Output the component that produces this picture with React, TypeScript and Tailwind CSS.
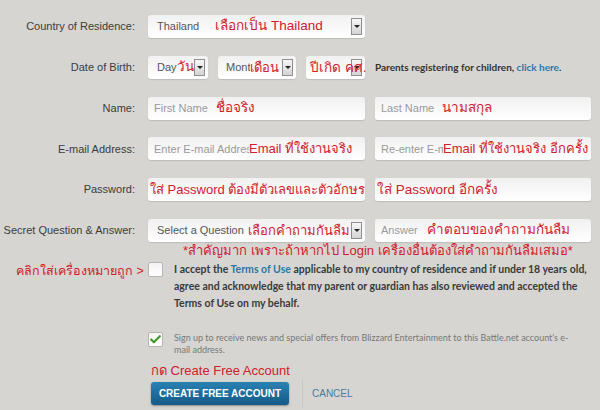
import { Check } from "lucide-react";

const red = "text-[#d0202c]";
const narrow = "font-['Lato','Liberation_Sans',sans-serif]";

function Arrow() {
  return (
    <span className="ml-auto mr-[3px] flex h-[17px] w-[11px] shrink-0 items-center justify-center border border-[#8f8f8f] bg-gradient-to-b from-[#f7f7f7] to-[#d4d4d4]">
      <span className="h-0 w-0 border-x-[3px] border-t-[3px] border-x-transparent border-t-[#222]" />
    </span>
  );
}

function Box({ className = "", children }: { className?: string; children: React.ReactNode }) {
  return (
    <div
      className={`relative flex h-[23px] shrink-0 items-center whitespace-nowrap rounded-[3px] bg-gradient-to-b from-[#f1f1f1] to-white shadow-[0_1px_1px_rgba(0,0,0,0.12)] ${className}`}
    >
      {children}
    </div>
  );
}

function Row({ label, children }: { label: string; children: React.ReactNode }) {
  return (
    <div className="flex h-[23px] items-center">
      <div className="w-[135px] shrink-0 whitespace-nowrap text-right text-[11px] text-[#3c3c3c]">{label}</div>
      <div className="ml-[13px] flex items-center gap-[10px]">{children}</div>
    </div>
  );
}

const ph = "text-[11px] text-[#9a9a9a]";
const ann = `text-[13.5px] ${red}`;
const ann13 = `text-[13px] ${red}`;

export default function App() {
  return (
    <div className="relative h-[410px] w-[600px] overflow-hidden bg-[#d6d5d1] font-['Liberation_Sans',sans-serif]">
      <div className="flex flex-col gap-[17.8px] pt-[15px]">
        <Row label="Country of Residence:">
          <Box className="w-[217px] pl-[9px]">
            <span className="text-[11px] text-[#555]">Thailand</span>
            <span className={`ml-[16px] ${ann}`}>เลือกเป็น Thailand</span>
            <Arrow />
          </Box>
        </Row>

        <Row label="Date of Birth:">
          <Box className="w-[60px] pl-[9px]">
            <span className="text-[11px] text-[#555]">Day</span>
            <span className={ann}>วัน</span>
            <Arrow />
          </Box>
          <Box className="w-[78px] pl-[8px]">
            <span className="w-[24px] shrink-0 overflow-hidden text-[11px] text-[#555]">Month</span>
            <span className={ann13}>เดือน</span>
            <Arrow />
          </Box>
          <Box className="w-[59px] pl-[4px]">
            <Arrow />
            <span className={`absolute left-[4px] top-[2px] ${ann}`}>ปีเกิด คศ.</span>
          </Box>
          <span className={`whitespace-nowrap text-[10px] font-bold text-[#333] ${narrow}`}>
            Parents registering for children, <span className="text-[#2a78a8]">click here</span>.
          </span>
        </Row>

        <Row label="Name:">
          <Box className="w-[217px] pl-[6px]">
            <span className={ph}>First Name</span>
            <span className={`ml-[8px] ${ann}`}>ชื่อจริง</span>
          </Box>
          <Box className="w-[216px] pl-[6px]">
            <span className={ph}>Last Name</span>
            <span className={`ml-[8px] ${ann}`}>นามสกุล</span>
          </Box>
        </Row>

        <Row label="E-mail Address:">
          <Box className="w-[217px] pl-[6px]">
            <span className={`w-[95px] shrink-0 overflow-hidden ${ph}`}>Enter E-mail Address</span>
            <span className={ann13}>Email ที่ใช้งานจริง</span>
          </Box>
          <Box className="w-[216px] pl-[6px]">
            <span className={`w-[62px] shrink-0 overflow-hidden ${ph}`}>Re-enter E-mail Address</span>
            <span className={ann13}>Email ที่ใช้งานจริง อีกครั้ง</span>
          </Box>
        </Row>

        <Row label="Password:">
          <Box className="w-[217px] pl-[2px]">
            <span className={ann13}>ใส่ Password ต้องมีตัวเลขและตัวอักษร</span>
          </Box>
          <Box className="w-[216px] pl-[2px]">
            <span className={ann}>ใส่ Password อีกครั้ง</span>
          </Box>
        </Row>

        <Row label="Secret Question & Answer:">
          <Box className="w-[217px] pl-[9px]">
            <span className="text-[11px] text-[#555]">Select a Question</span>
            <span className={`ml-[4px] ${ann13}`}>เลือกคำถามกันลืม</span>
            <Arrow />
          </Box>
          <Box className="w-[216px] pl-[6px]">
            <span className={ph}>Answer</span>
            <span className={`ml-[9px] ${ann}`}>คำตอบของคำถามกันลืม</span>
          </Box>
        </Row>
      </div>

      <div className={`mt-[1px] whitespace-nowrap pl-[183px] text-[13px] leading-[16px] ${red}`}>
        *สำคัญมาก เพราะถ้าหากไป Login เครื่องอื่นต้องใส่คำถามกันลืมเสมอ*
      </div>

      <div className="mt-[3px] flex">
        <div className={`w-[148px] shrink-0 whitespace-nowrap pl-[16px] pt-[1px] text-[12.5px] leading-[16px] ${red}`}>
          คลิกใส่เครื่องหมายถูก &gt;
        </div>
        <span className="h-[15px] w-[15px] shrink-0 rounded-[2px] border border-[#b5b5b5] bg-gradient-to-b from-[#f4f4f4] to-white" />
        <p className={`ml-[11px] -mt-[1px] whitespace-nowrap text-[10.5px] font-bold leading-[17px] text-[#3a3a3a] ${narrow}`}>
          I accept the <span className="text-[#2a78a8]">Terms of Use</span> applicable to my country of residence and if under 18 years old,
          <br />
          agree and acknowledge that my parent or guardian has also reviewed and accepted the
          <br />
          Terms of Use on my behalf.
        </p>
      </div>

      <div className="mt-[20px] flex pl-[148px]">
        <span className="flex h-[15px] w-[15px] shrink-0 items-center justify-center rounded-[2px] border border-[#b5b5b5] bg-gradient-to-b from-[#f4f4f4] to-white">
          <Check size={13} strokeWidth={4} className="text-[#3f9a2a]" />
        </span>
        <p className={`ml-[11px] whitespace-nowrap text-[9px] leading-[12px] text-[#777] ${narrow}`}>
          Sign up to receive news and special offers from Blizzard Entertainment to this Battle.net account's e-
          <br />
          mail address.
        </p>
      </div>

      <div className={`mt-[6px] pl-[151px] text-[13px] leading-[18px] ${red}`}>กด Create Free Account</div>

      <div className="flex items-center pl-[151px]">
        <button className="h-[23px] w-[138px] rounded-[3px] bg-gradient-to-b from-[#2a82b3] to-[#145a88] text-[10px] font-bold text-white shadow-[0_1px_2px_rgba(0,0,0,0.35)]">
          CREATE FREE ACCOUNT
        </button>
        <span className="ml-[13px] h-[27px] w-px bg-[#c8c7c3]" />
        <span className="ml-[9px] text-[10px] text-[#4a7c9c]">CANCEL</span>
      </div>
    </div>
  );
}
